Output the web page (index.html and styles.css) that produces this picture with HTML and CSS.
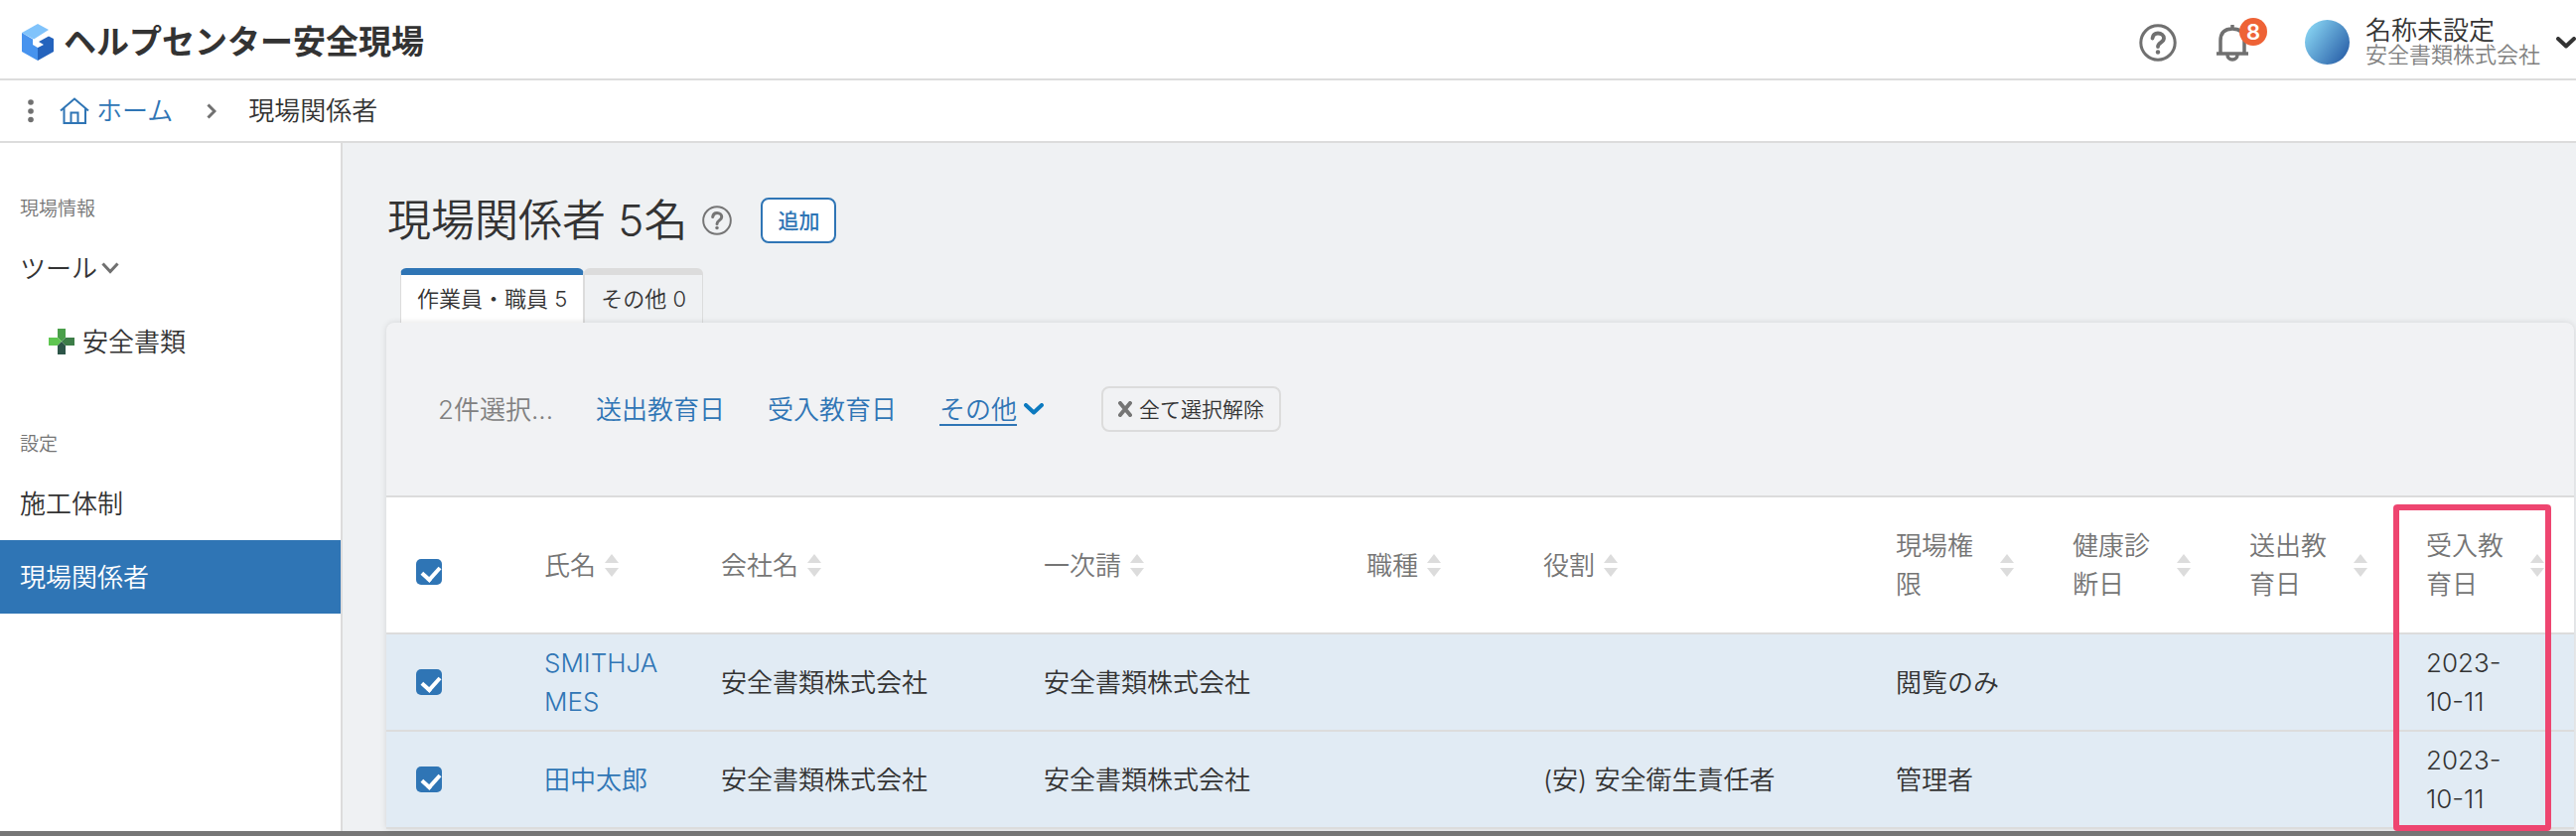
FILE: index.html
```html
<!DOCTYPE html>
<html lang="ja">
<head>
	<meta charset="UTF-8">
	<title>現場関係者</title>
	<link rel="stylesheet" href="styles.css">
</head>
<body>
	<header class="header">
		<a href="#" class="brand">
			<svg class="logo" viewBox="0 0 32 37" width="32" height="37">
				<path fill="#80c3fb" d="M0 9 16 0 27 6 12 15.500z"/>
				<path fill="#4793ee" d="M0 9 11 15.500 11 21 16 24V37L0 28z"/>
				<path fill="#2463bd" d="M16 24 22 21 17 18 27 12.500 32 15V28L16 37z"/>
			</svg>
			<span>ヘルプセンター安全現場</span>
		</a>
		<div class="tools">
			<button type="button" class="icon_btn" aria-label="ヘルプ">
				<svg viewBox="0 0 38 38" width="38" height="38" fill="none" stroke="#707070">
					<circle cx="19" cy="19" r="17.200" stroke-width="3"/>
					<path stroke-width="3.800" stroke-linecap="round" d="M13.500 14.500C14 11 16.500 9.500 19 9.500c3.500 0 6 2.200 6 5 0 4.500-6 4.300-6 8.500"/>
					<circle cx="19" cy="28.500" r="2.200" fill="#707070" stroke="none"/>
				</svg>
			</button>
			<button type="button" class="icon_btn bell" aria-label="お知らせ">
				<svg viewBox="0 0 34 38" width="34" height="38" fill="none" stroke="#707070" stroke-width="3.500">
					<path d="M1 30H33M5 30V17C5 9 9.500 5 17 5s12 4 12 12v13M17 1v4"/>
					<path d="M12 31c0 3 2 5 5 5s5-2 5-5"/>
				</svg>
				<span class="badge">8</span>
			</button>
			<a href="#" class="user">
				<span class="avatar"></span>
				<span class="user_text">
					<span class="user_name">名称未設定</span>
					<span class="user_company">安全書類株式会社</span>
				</span>
				<svg viewBox="0 0 20 12" width="20" height="12" fill="none" stroke="#333" stroke-width="4"><path stroke-linecap="round" stroke-linejoin="round" d="M2 2 10 9.500 18 2"/></svg>
			</a>
		</div>
	</header>

	<nav class="breadcrumb">
		<button type="button" class="dots" aria-label="メニュー">
			<svg viewBox="0 0 6 24" width="6" height="24" fill="#707070"><circle cx="3" cy="3" r="2.800"/><circle cx="3" cy="12" r="2.800"/><circle cx="3" cy="20.500" r="2.800"/></svg>
		</button>
		<a href="#" class="home">
			<svg viewBox="0 0 30 28" width="30" height="28" fill="none" stroke="#2f75b5" stroke-width="2"><path d="M1 13.500 15 1.500 29 13.500M4.500 11V26H26V11M11.500 26V15.500H18.500V26"/></svg>
			<span>ホーム</span>
		</a>
		<svg viewBox="0 0 10 16" width="10" height="16" fill="none" stroke="#707070" stroke-width="3"><path d="M1.500 1.500 8 8 1.500 14.500"/></svg>
		<span>現場関係者</span>
	</nav>

	<div class="layout">
		<aside class="sidebar">
			<h2>現場情報</h2>
			<button type="button" class="side_item">ツール
				<svg viewBox="0 0 18 12" width="18" height="12" fill="none" stroke="#707070" stroke-width="3"><path d="M1.500 1.500 9 9.500 16.500 1.500"/></svg>
			</button>
			<a href="#" class="side_item sub">
				<svg viewBox="0 0 26 26" width="26" height="26">
					<path fill="#4a9f4a" d="M9 0H17V9L13 13 9 9z"/>
					<path fill="#5fc651" d="M0 9H9L13 13 9 17H0z"/>
					<path fill="#3d7d48" d="M26 9H17L13 13 17 17H26z"/>
					<path fill="#2d5548" d="M9 26H17V17L13 13 9 17z"/>
				</svg>安全書類
			</a>
			<h2>設定</h2>
			<a href="#" class="side_item">施工体制</a>
			<a href="#" class="side_item current">現場関係者</a>
		</aside>

		<main class="main">
			<div class="title_row">
				<h1>現場関係者 5名</h1>
				<button type="button" class="icon_btn" aria-label="ヘルプ">
					<svg viewBox="0 0 38 38" width="30" height="30" fill="none" stroke="#757575">
						<circle cx="19" cy="19" r="17.500" stroke-width="2.500"/>
						<path stroke-width="3.800" stroke-linecap="round" d="M13.500 14.500C14 11 16.500 9.500 19 9.500c3.500 0 6 2.200 6 5 0 4.500-6 4.300-6 9"/>
						<circle cx="19" cy="28.500" r="2.200" fill="#757575" stroke="none"/>
					</svg>
				</button>
				<button type="button" class="add_btn">追加</button>
			</div>

			<div class="tabs">
				<button type="button" class="tab active">作業員・職員 5</button>
				<button type="button" class="tab">その他 0</button>
			</div>

			<div class="panel">
				<div class="toolbar">
					<span class="count">2件選択...</span>
					<a href="#">送出教育日</a>
					<a href="#">受入教育日</a>
					<a href="#" class="more"><span>その他</span>
						<svg viewBox="0 0 20 12" width="20" height="12" fill="none" stroke="#0c7abf" stroke-width="4"><path stroke-linecap="round" stroke-linejoin="round" d="M2 2 10 9.500 18 2"/></svg>
					</a>
					<button type="button" class="clear_btn">
						<svg viewBox="0 0 14 16" width="14" height="16" fill="none" stroke="#757575" stroke-width="4" stroke-linecap="round"><path d="M2 2 12 14M12 2 2 14"/></svg>全て選択解除
					</button>
				</div>
				<div class="table_wrap">
				<table class="members">
					<colgroup>
						<col class="c_check">
						<col class="c_small">
						<col class="c_company">
						<col class="c_company">
						<col class="c_small">
						<col class="c_role">
						<col class="c_small">
						<col class="c_small">
						<col class="c_small">
						<col>
					</colgroup>
					<thead>
						<tr>
							<th class="check"><input type="checkbox" aria-label="全て選択" checked></th>
							<th><div class="sort"><span>氏名</span><i></i></div></th>
							<th><div class="sort"><span>会社名</span><i></i></div></th>
							<th><div class="sort"><span>一次請</span><i></i></div></th>
							<th><div class="sort"><span>職種</span><i></i></div></th>
							<th><div class="sort"><span>役割</span><i></i></div></th>
							<th><div class="sort"><span>現場権限</span><i></i></div></th>
							<th><div class="sort"><span>健康診断日</span><i></i></div></th>
							<th><div class="sort"><span>送出教育日</span><i></i></div></th>
							<th><div class="sort"><span>受入教育日</span><i></i></div></th>
						</tr>
					</thead>
					<tbody>
						<tr>
							<td class="check"><input type="checkbox" aria-label="SMITHJAMES" checked></td>
							<td class="name"><a href="#">SMITHJAMES</a></td>
							<td>安全書類株式会社</td>
							<td>安全書類株式会社</td>
							<td></td>
							<td></td>
							<td>閲覧のみ</td>
							<td></td>
							<td></td>
							<td>2023-10-11</td>
						</tr>
						<tr>
							<td class="check"><input type="checkbox" aria-label="田中太郎" checked></td>
							<td class="name"><a href="#">田中太郎</a></td>
							<td>安全書類株式会社</td>
							<td>安全書類株式会社</td>
							<td></td>
							<td>(安) 安全衛生責任者</td>
							<td>管理者</td>
							<td></td>
							<td></td>
							<td>2023-10-11</td>
						</tr>
					</tbody>
				</table>
				</div>
				<div class="mark"></div>
			</div>
		</main>
	</div>
	<div class="bottom_bar"></div>
</body>
</html>
```

FILE: styles.css
```css
*{
	margin: 0;
	padding: 0;
	box-sizing: border-box;
}

body{
	display: flex;
	flex-direction: column;
	min-height: 100vh;
	font: 350 26px/39px Inter, "Noto Sans CJK JP", sans-serif;
	color: #333;
	background: #fff;
}

a{
	color: #2f75b5;
	text-decoration: none;
}

button{
	font: inherit;
	color: inherit;
	background: none;
	border: 0;
	cursor: pointer;
}

svg{
	display: block;
	flex: none;
}

/* header */
.header{
	display: flex;
	align-items: center;
	justify-content: space-between;
	height: 81px;
	padding: 6px 0 0 22px;
	border-bottom: 2px solid #dcdcdc;
}

.brand{
	display: flex;
	align-items: center;
	gap: 10px;
	font-size: 33px;
	font-weight: 700;
	color: #333;
}

.tools{
	display: flex;
	align-items: center;
}

.bell{
	position: relative;
	margin: 0 56px 0 39px;
}

.badge{
	position: absolute;
	left: 24px;
	top: -6px;
	width: 28px;
	height: 28px;
	border-radius: 50%;
	background: #ee6236;
	color: #fff;
	font-size: 22px;
	font-weight: 600;
	line-height: 28px;
	text-align: center;
}

.user{
	display: flex;
	align-items: center;
	gap: 16px;
	color: #333;
}

.avatar{
	width: 45px;
	height: 45px;
	border-radius: 50%;
	background: linear-gradient(125deg, #87d3f2 10%, #2b62a9 90%);
}

.user_name,
.user_company{
	display: block;
	line-height: 24px;
}

.user_company{
	font-size: 22px;
	color: #808080;
}

/* breadcrumb */
.breadcrumb{
	display: flex;
	align-items: center;
	height: 63px;
	padding: 0 28px;
	border-bottom: 2px solid #dcdcdc;
}

.home{
	display: flex;
	align-items: center;
	gap: 7px;
	margin: 0 34px 0 26px;
}

.breadcrumb > span{
	margin-left: 32px;
}

.layout{
	display: flex;
	flex: 1;
}

/* sidebar */
.sidebar{
	flex: none;
	width: 345px;
	border-right: 2px solid #dcdcdc;
}

.sidebar h2{
	margin-top: 45px;
	padding-left: 20px;
	font-size: 19px;
	font-weight: 350;
	line-height: 44px;
	color: #757575;
}

.side_item{
	display: flex;
	align-items: center;
	gap: 4px;
	width: 100%;
	height: 74px;
	padding-left: 20px;
	color: #333;
}

.side_item.sub{
	gap: 8px;
	padding-left: 49px;
}

.side_item.current{
	color: #fff;
	background: #2f75b5;
}

/* main */
.main{
	flex: 1;
	min-width: 0;
	padding: 43px 2px 2px 44px;
	background: #eff1f3;
}

.title_row{
	display: flex;
	align-items: center;
	height: 70px;
	padding-left: 1px;
}

h1{
	margin-right: 15px;
	font-size: 44px;
	font-weight: 350;
}

.add_btn{
	height: 46px;
	margin-left: 29px;
	padding: 0 15px;
	border: 2px solid #2f75b5;
	border-radius: 8px;
	background: #fff;
	color: #2f75b5;
	font-size: 21px;
	font-weight: 500;
}

.tabs{
	display: flex;
	margin: 13px 0 0 14px;
}

.tab{
	height: 55px;
	padding: 0 16px;
	border: 1px solid #dcdcdc;
	border-top: 7px solid #dcdcdc;
	border-bottom: 0;
	border-radius: 6px 6px 0 0;
	font-size: 22px;
}

.tab.active{
	border-top-color: #2f75b5;
	background: #fff;
}

.panel{
	position: relative;
	border-radius: 8px 8px 0 0;
	background: #f1f2f4;
	box-shadow: 0 0 6px rgba(0, 0, 0, .12);
}

.toolbar{
	display: flex;
	align-items: center;
	gap: 43px;
	height: 176px;
	padding: 0 52px;
	border-bottom: 2px solid #dcdcdc;
}

.count{
	color: #808080;
}

.more{
	display: flex;
	align-items: center;
	gap: 7px;
	margin-right: 15px;
}

.more span{
	text-decoration: underline;
	text-underline-offset: 5px;
}

.clear_btn{
	display: flex;
	align-items: center;
	gap: 7px;
	height: 46px;
	padding: 0 15px;
	border: 2px solid #dcdcdc;
	border-radius: 8px;
	font-size: 21px;
}

/* members table */
.table_wrap{
	overflow: hidden;
	background: #fff;
}

.members{
	width: 100%;
	table-layout: fixed;
	border-collapse: separate;
	border-spacing: 0;
}

.c_check{
	width: 149px;
}

.c_small{
	width: 178px;
}

.c_company{
	width: 325px;
}

.c_role{
	width: 355px;
}

.members th,
.members td{
	padding: 9px 49px 9px 10px;
	border-bottom: 2px solid #dcdcdc;
	text-align: left;
	vertical-align: middle;
}

.members th{
	height: 138px;
	font-weight: 350;
	color: #757575;
}

.members td{
	height: 98px;
	background: #e1ebf4;
}

.members th:last-child{
	padding-right: 30px;
}

.members .check{
	padding-left: 30px;
}

.members th.check{
	padding-top: 23px;
}

.name{
	word-break: break-all;
}

.sort{
	display: flex;
	align-items: center;
	gap: 9px;
}

/* up and down arrows */
.sort i{
	flex: none;
	width: 14px;
}

.sort i::before,
.sort i::after{
	content: "";
	display: block;
	border: 7px solid transparent;
	border-top: 0;
	border-bottom: 9px solid #dcdcdc;
}

.sort i::after{
	margin-top: 5px;
	border-top: 9px solid #dcdcdc;
	border-bottom: 0;
}

input[type="checkbox"]{
	appearance: none;
	display: block;
	width: 26px;
	height: 26px;
	border-radius: 5px;
	background: #2f75b5;
}

input[type="checkbox"]:checked::before{
	content: "";
	display: block;
	width: 8px;
	height: 14px;
	margin: 4px 0 0 9px;
	border: solid #fff;
	border-width: 0 4px 4px 0;
	transform: rotate(42deg);
}

/* red frame over the last column */
.mark{
	position: absolute;
	right: 23px;
	top: 183px;
	bottom: -2px;
	width: 159px;
	border: 6px solid #ee4570;
	border-radius: 4px;
}

.bottom_bar{
	height: 5px;
	background: #777;
}
```
